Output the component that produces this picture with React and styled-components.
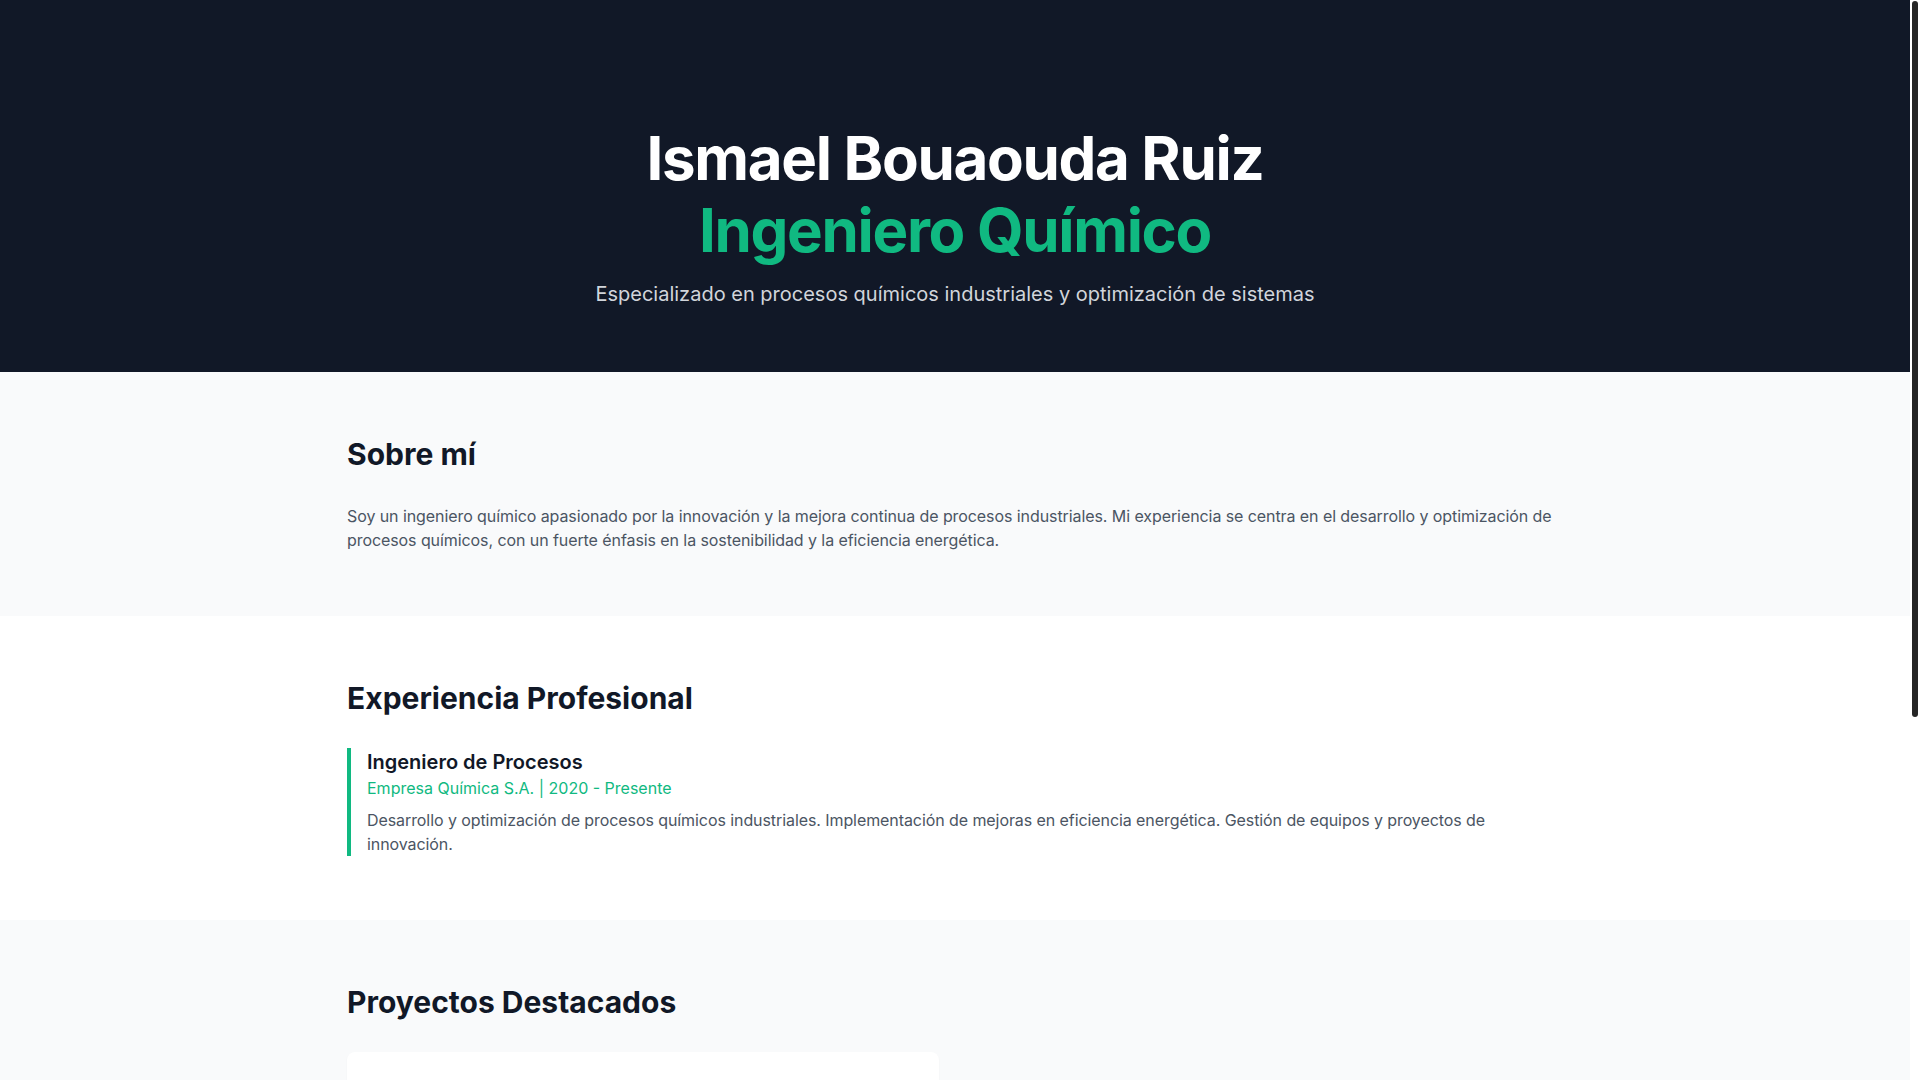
import React from 'react'
import styled, { createGlobalStyle } from 'styled-components'

const GlobalStyle = createGlobalStyle`
  * {
    box-sizing: border-box;
  }
  body {
    margin: 0;
    font-family: Inter, "Noto Sans", "Liberation Sans", sans-serif;
    color: #111827;
    background: #ffffff;
  }
  h1, h2, h3, p {
    margin: 0;
  }
`;

// the reference shows the browser's scroll bar; it is drawn as a rail next to the page
const Shell = styled.div`
  display: flex;
  align-items: stretch;
`;

const Page = styled.main`
  flex: 1;
  min-width: 0;
`;

const ScrollRail = styled.div`
  width: 10px;
  flex-shrink: 0;
  background: #ffffff;
`;

const Thumb = styled.div`
  position: sticky;
  top: 0;
  height: 716px;
  margin: 1px 2px 0;
  border-radius: 4px;
  background: #262626;
`;

const Hero = styled.header`
  background-color: #111827;
  color: #ffffff;
  text-align: center;
  padding: 128px 32px 64px;
`;

const Name = styled.h1`
  font-size: 60px;
  line-height: 60px;
  font-weight: 700;
  letter-spacing: -0.022em;
`;

const Role = styled.span`
  display: block;
  margin-top: 12px;
  color: #10b981;
`;

const Tagline = styled.p`
  margin-top: 20px;
  font-size: 20px;
  line-height: 28px;
  color: #d1d5db;
`;

const Section = styled.section`
  background-color: ${({ muted }) => (muted ? '#f9fafb' : '#ffffff')};
  padding: 64px 0;
`;

const Container = styled.div`
  max-width: 1280px;
  margin: 0 auto;
  padding: 0 32px;
`;

const SectionTitle = styled.h2`
  font-size: 30px;
  line-height: 36px;
  font-weight: 700;
  color: #111827;
  margin-bottom: 32px;
`;

const Text = styled.p`
  font-size: 16px;
  line-height: 24px;
  letter-spacing: -0.005em;
  color: #4b5563;
`;

const Job = styled.article`
  border-left: 4px solid #10b981;
  padding-left: 16px;
`;

const JobTitle = styled.h3`
  font-size: 20px;
  line-height: 28px;
  font-weight: 600;
  color: #111827;
`;

const JobMeta = styled.p`
  font-size: 16px;
  line-height: 24px;
  color: #10b981;
`;

const JobText = styled(Text)`
  margin-top: 8px;
`;

const Grid = styled.div`
  display: grid;
  grid-template-columns: 1fr 1fr;
  gap: 32px;
`;

const Card = styled.div`
  background: #ffffff;
  border-radius: 8px;
  padding: 24px;
  box-shadow: 0 1px 2px rgba(0, 0, 0, 0.04);
`;

const CardTitle = styled.h3`
  font-size: 20px;
  line-height: 28px;
  font-weight: 600;
  color: #111827;
  margin-bottom: 8px;
`;

const Tags = styled.div`
  display: flex;
  flex-wrap: wrap;
  gap: 8px;
  margin-top: 16px;
`;

const Tag = styled.span`
  background: ${({ light }) => (light ? '#ecfdf5' : '#f3f4f6')};
  color: ${({ light }) => (light ? '#047857' : '#374151')};
  padding: ${({ light }) => (light ? '6px 14px' : '4px 10px')};
  border-radius: 9999px;
  font-size: 14px;
  line-height: 20px;
`;

const Skills = styled.div`
  display: flex;
  flex-wrap: wrap;
  gap: 12px;
`;

const Footer = styled.footer`
  background-color: #111827;
  color: #9ca3af;
  text-align: center;
  padding: 40px 32px;
  font-size: 14px;
  line-height: 20px;
`;

const projects = [
  {
    title: 'Optimización de Planta de Destilación',
    text: 'Rediseño del proceso de destilación fraccionada logrando una reducción del 15% en el consumo energético.',
    tags: ['Aspen Plus', 'Eficiencia energética'],
  },
]

const skills = ['Aspen Plus', 'Simulación de procesos', 'Control de calidad', 'Gestión de proyectos', 'Seguridad industrial', 'Lean Manufacturing']

export default function App() {
  return (
    <Shell>
      <GlobalStyle />
      <Page>
        <Hero>
          <Name>
            Ismael Bouaouda Ruiz
            <Role>Ingeniero Químico</Role>
          </Name>
          <Tagline>Especializado en procesos químicos industriales y optimización de sistemas</Tagline>
        </Hero>

        <Section muted>
          <Container>
            <SectionTitle>Sobre mí</SectionTitle>
            <Text>
              Soy un ingeniero químico apasionado por la innovación y la mejora continua de procesos industriales. Mi experiencia se centra en el desarrollo y optimización de procesos químicos, con un fuerte énfasis en la sostenibilidad y la eficiencia energética.
            </Text>
          </Container>
        </Section>

        <Section>
          <Container>
            <SectionTitle>Experiencia Profesional</SectionTitle>
            <Job>
              <JobTitle>Ingeniero de Procesos</JobTitle>
              <JobMeta>Empresa Química S.A. | 2020 - Presente</JobMeta>
              <JobText>
                Desarrollo y optimización de procesos químicos industriales. Implementación de mejoras en eficiencia energética. Gestión de equipos y proyectos de innovación.
              </JobText>
            </Job>
          </Container>
        </Section>

        <Section muted>
          <Container>
            <SectionTitle>Proyectos Destacados</SectionTitle>
            <Grid>
              {projects.map((p) => (
                <Card key={p.title}>
                  <CardTitle>{p.title}</CardTitle>
                  <Text>{p.text}</Text>
                  <Tags>
                    {p.tags.map((t) => (
                      <Tag key={t}>{t}</Tag>
                    ))}
                  </Tags>
                </Card>
              ))}
            </Grid>
          </Container>
        </Section>

        <Section>
          <Container>
            <SectionTitle>Habilidades</SectionTitle>
            <Skills>
              {skills.map((s) => (
                <Tag light key={s}>{s}</Tag>
              ))}
            </Skills>
          </Container>
        </Section>

        <Footer>© 2024 Ismael Bouaouda Ruiz</Footer>
      </Page>
      <ScrollRail aria-hidden="true">
        <Thumb />
      </ScrollRail>
    </Shell>
  )
}
